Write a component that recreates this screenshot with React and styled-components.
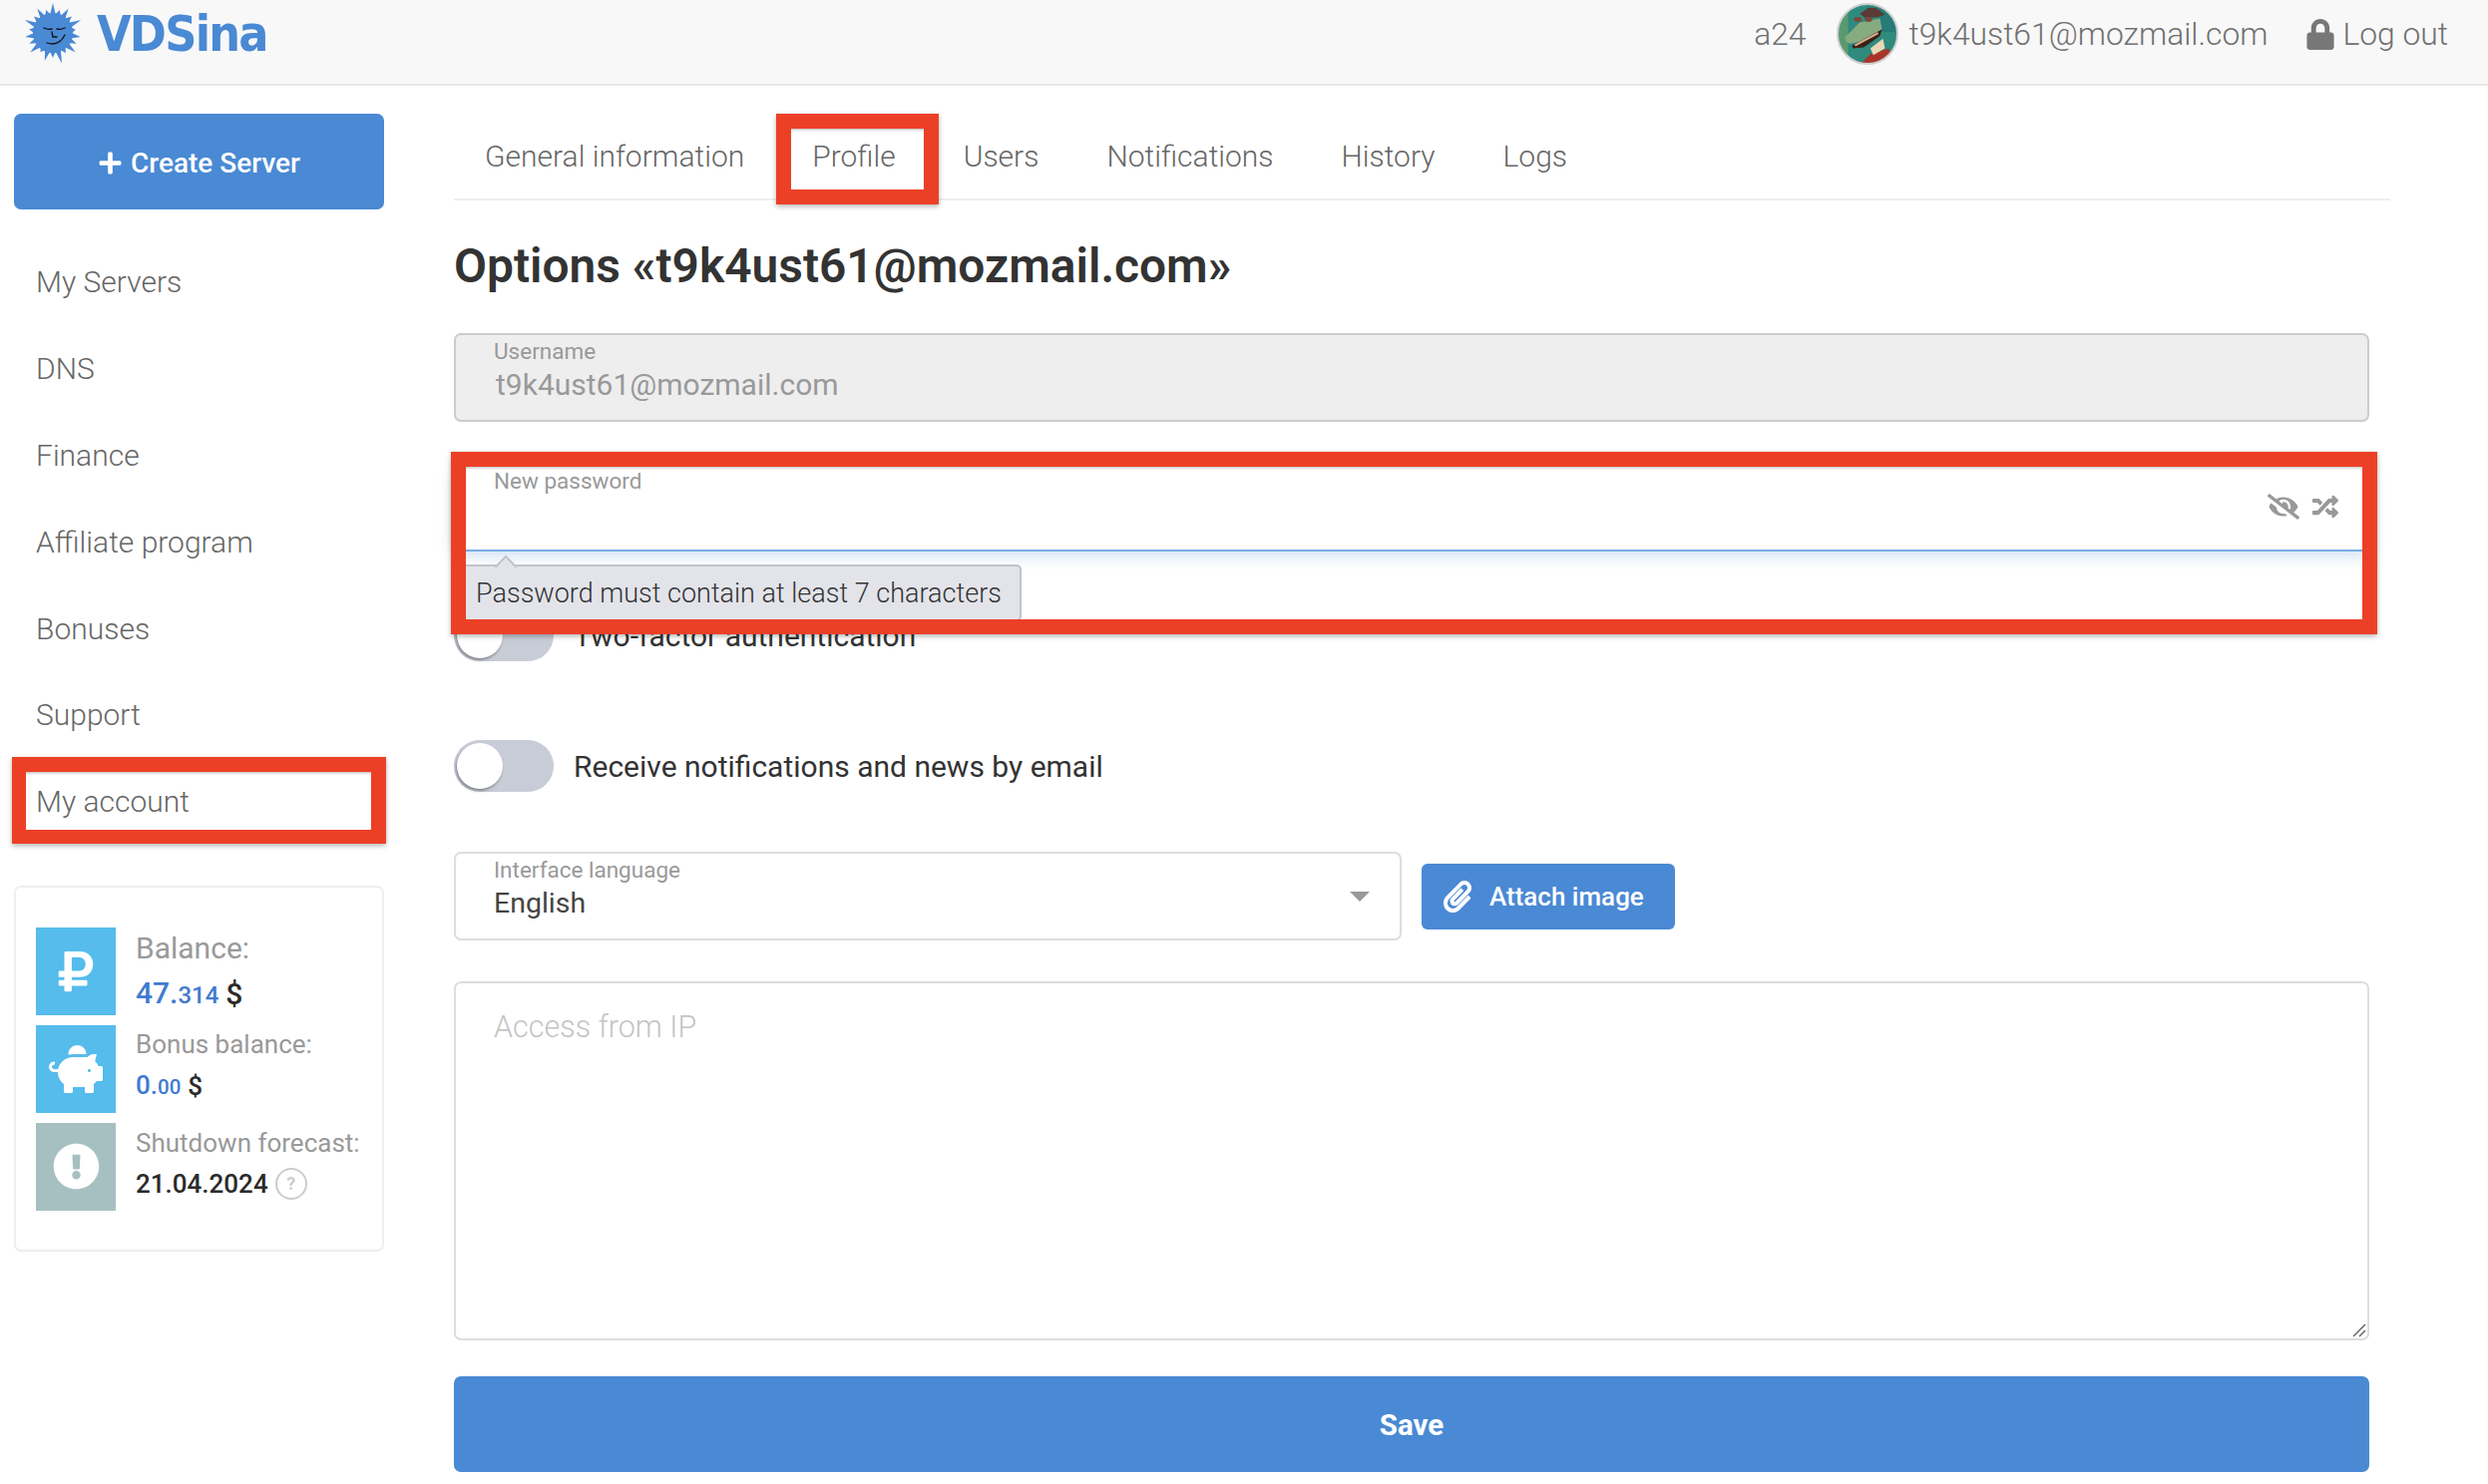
import React from 'react';
import styled, { createGlobalStyle } from 'styled-components';
import { FaLock, FaPlus, FaRubleSign, FaPiggyBank, FaExclamationCircle, FaEyeSlash, FaRandom, FaPaperclip } from 'react-icons/fa';

const Global = createGlobalStyle`
  html, body { margin: 0; padding: 0; background: #fff; }
  body { font-family: Roboto, "Liberation Sans", sans-serif; color: #333; }
  * { box-sizing: border-box; }
`;

const BLUE = '#4a89d4';
const RED = '#ec4026';

const Page = styled.div`width: 2494px; height: 1488px; overflow: hidden;`;

const Header = styled.header`
  height: 86px; background: #f8f8f8; border-bottom: 2px solid #e8e8e8;
  display: flex; align-items: flex-start; justify-content: space-between;
  padding: 0 40px 0 23px;
`;
const Brand = styled.div`display: flex; align-items: center; gap: 14px; height: 66px;`;
const Wordmark = styled.span`
  display: inline-block; font-family: "DejaVu Sans", sans-serif; font-weight: 700; font-size: 50px; line-height: 1;
  letter-spacing: -2px; color: ${BLUE}; transform: scaleX(.895); transform-origin: left; margin-top: 1px;
`;
const UserBar = styled.div`
  display: flex; align-items: center; height: 68px; font-size: 31.8px; font-weight: 300; color: #707070;
`;
const Account = styled.span`margin-right: 31px;`;
const Avatar = styled.svg`width: 62px; height: 62px; margin-right: 10px; display: block;`;
const Email = styled.span`margin-right: 39px;`;
const LockIcon = styled(FaLock)`width: 28px; height: 31px; margin-right: 8px; color: #777;`;

const Body = styled.div`display: flex;`;

const Sidebar = styled.aside`width: 455px; padding: 28px 70px 0 14px; flex: none;`;
const CreateButton = styled.button`
  width: 100%; height: 96px; background: ${BLUE}; border: 0; border-radius: 7px; color: #fff; padding: 2px 0 0;
  display: flex; align-items: center; justify-content: center; gap: 8px; font: 500 28px Roboto, sans-serif;
  svg { width: 25px; height: 25px; }
`;
const Nav = styled.nav`margin-top: 29.5px;`;
const NavItem = styled.div`
  position: relative; height: 86.8px; display: flex; align-items: center; padding-left: 22px;
  font-size: 30px; font-weight: 300; color: #666;
`;
const MarkBox = styled.div`
  position: absolute; border: 15px solid ${RED}; pointer-events: none; z-index: 5;
  box-shadow: 0 2px 5px rgba(0,0,0,.3), inset 0 3px 3px -2px rgba(0,0,0,.3);
`;
const AccountMark = styled(MarkBox)`left: -2px; right: -2px; top: -1px; height: 87px; border-width: 15px 15px 14px 14px;`;
const Card = styled.section`
  margin-top: 40.6px; height: 367px; border: 2px solid #eee; border-radius: 7px; padding: 40px 0 0 20px;
  display: flex; flex-direction: column; gap: 10px;
`;
const Stat = styled.div`display: flex; gap: 20px; height: 88px;`;
const StatIcon = styled.div`
  width: 80px; height: 88px; flex: none; display: flex; align-items: center; justify-content: center;
  background: ${p => p.$bg}; color: #fff;
  svg { width: ${p => p.$size}px; height: ${p => p.$size}px; }
`;
const StatText = styled.div`
  display: flex; flex-direction: column; justify-content: center; white-space: nowrap;
  padding-bottom: ${p => p.$big ? 0 : 5}px;
`;
const StatLabel = styled.div`
  font-size: ${p => p.$big ? 30 : 26}px; color: #999; line-height: ${p => p.$big ? 46 : 40}px;
`;
const StatValue = styled.div`
  font-weight: 500; font-size: ${p => p.$big ? 30 : 26}px; line-height: ${p => p.$big ? 44 : 42}px; color: #2b2b2b;
  display: flex; align-items: center;
`;
const Amount = styled.span`color: #3f7bd0; margin-right: 7px;`;
const Cents = styled.small`font-size: ${p => p.$big ? 24 : 20.5}px; font-weight: 500;`;
const Hint = styled.span`
  width: 32px; height: 32px; border: 2px solid #ccc; border-radius: 50%; color: #ccc; margin-left: 7px;
  display: inline-flex; align-items: center; justify-content: center; font-size: 18px; font-weight: 700;
`;

const Main = styled.main`width: 1941px; flex: none;`;
const Tabs = styled.div`
  height: 115px; padding-top: 27px; border-bottom: 2px solid #eee; display: flex; align-items: center;
`;
const Tab = styled.div`
  position: relative; padding: 0 34px; font-size: 30px; font-weight: 300; color: #666; white-space: nowrap;
  &:first-child { margin-left: -3px; }
`;
const TabMark = styled(MarkBox)`left: -2px; width: 163px; top: -25px; height: 91px;`;
const Form = styled.div`width: 1920px;`;
const Title = styled.h1`
  margin: 0; height: 133px; padding-bottom: 2px; display: flex; align-items: center; font-size: 47.9px; font-weight: 600; color: #333;
`;
const Field = styled.div`
  position: relative; height: 89px; width: ${p => p.$w || '100%'}; border-radius: 7px; padding: 2.5px 38px 0;
  border: 2px solid ${p => p.$focus ? '#7aaee6' : p.$disabled ? '#ccc' : '#ddd'};
  background: ${p => p.$disabled ? '#eee' : '#fff'};
  ${p => p.$focus && 'box-shadow: 0 4px 16px rgba(74,137,212,.28);'}
`;
const FieldLabel = styled.div`font-size: 22.5px; color: #999; line-height: 26px;`;
const FieldValue = styled.div`
  font-size: ${p => p.$muted ? 30 : 28.5}px; line-height: 42px; color: ${p => p.$muted ? '#999' : '#444'};
  padding-left: ${p => p.$muted ? 2 : 0}px;
`;
const PasswordBlock = styled.div`position: relative; margin-top: 41px; z-index: 3;`;
const PasswordTools = styled.div`
  position: absolute; right: 29px; top: 29px; display: flex; align-items: center; gap: 13px; color: #999;
`;
const EyeIcon = styled(FaEyeSlash)`width: 32px; height: 26px;`;
const ShuffleIcon = styled(FaRandom)`width: 26px; height: 26px;`;
const Tooltip = styled.div`
  position: absolute; left: 0; top: 102px; width: 569px; height: 57px; background: #e3e4ea;
  border: 2px solid #c0c2cc; border-radius: 5px; padding-left: 20px; display: flex; align-items: center;
  font-size: 27px; font-weight: 300; color: #333; white-space: nowrap;
  &::before {
    content: ""; position: absolute; left: 42px; top: -8px; width: 14px; height: 14px; background: #e3e4ea;
    border: 2px solid #c0c2cc; border-width: 2px 0 0 2px; transform: rotate(45deg);
  }
`;
const PasswordMark = styled(MarkBox)`left: -3px; right: -8px; top: -11px; height: 183px;`;
const ToggleRow = styled.div`
  display: flex; align-items: center; gap: 20px; height: 52px; margin-top: ${p => p.$mt}px;
  font-size: 30px; color: #333;
`;
const Toggle = styled.div`
  position: relative; width: 100px; height: 52px; border-radius: 26px; background: #c8ccd6; flex: none;
  &::after {
    content: ""; position: absolute; left: 3px; top: 3px; width: 46px; height: 46px; border-radius: 50%;
    background: #fff; box-shadow: -1px 2px 3px rgba(0,0,0,.35);
  }
`;
const LanguageRow = styled.div`display: flex; align-items: center; gap: 20px; margin-top: 60px;`;
const Caret = styled.span`
  position: absolute; right: 30px; top: 38px; width: 0; height: 0;
  border-left: 10px solid transparent; border-right: 10px solid transparent; border-top: 10px solid #999;
`;
const AttachButton = styled.button`
  width: 254px; height: 66px; border: 0; border-radius: 6px; background: ${BLUE}; color: #fff;
  display: flex; align-items: center; gap: 17px; padding-left: 21px; font: 500 26px Roboto, sans-serif;
  svg { width: 30px; height: 32px; }
`;
const AccessArea = styled.div`
  position: relative; height: 360px; margin-top: 41px; border: 2px solid #ddd; border-radius: 7px;
  padding: 26px 38px; font-size: 30.5px; font-weight: 300; color: #c4c4c4;
`;
const ResizeGrip = styled.svg`position: absolute; right: 1px; bottom: 1px; width: 16px; height: 16px;`;
const SaveButton = styled.button`
  display: block; width: 100%; height: 96px; margin-top: 36px; border: 0; border-radius: 7px; background: ${BLUE};
  color: #fff; font: 700 29.5px Roboto, sans-serif; padding: 2px 0 0;
`;

const sunPoints = (() => {
  const outer = [30, 24, 29, 25, 31, 23, 28, 26, 30, 24, 32, 25, 29, 23, 30, 26, 28, 24, 31, 25, 29, 24];
  const pts = [];
  outer.forEach((r, i) => {
    const a = (i / outer.length) * Math.PI * 2 - Math.PI / 2;
    const b = ((i + .5) / outer.length) * Math.PI * 2 - Math.PI / 2;
    pts.push(`${(30 + r * Math.cos(a)).toFixed(1)},${(30 + r * Math.sin(a)).toFixed(1)}`);
    pts.push(`${(30 + 19 * Math.cos(b)).toFixed(1)},${(30 + 19 * Math.sin(b)).toFixed(1)}`);
  });
  return pts.join(' ');
})();

const Sun = () => (
  <svg width="60" height="60" viewBox="0 0 60 60" style={{ flex: 'none' }}>
    <polygon points={sunPoints} fill={BLUE} />
    <circle cx="30" cy="30" r="20" fill={BLUE} />
    <g fill="none" stroke="#111" strokeWidth="1.3" strokeLinecap="round">
      <path d="M21 25q4 2 8 1M34 26q4 1 8-1" />
      <path d="M29 29l1 5h4" />
      <path d="M24 40q12 4 18-8" />
    </g>
  </svg>
);

const AvatarArt = () => (
  <Avatar viewBox="0 0 64 64">
    <defs>
      <clipPath id="av"><circle cx="32" cy="32" r="31" /></clipPath>
      <filter id="soft"><feGaussianBlur stdDeviation="0.7" /></filter>
    </defs>
    <g clipPath="url(#av)">
      <g filter="url(#soft)">
        <rect width="64" height="64" fill="#2e8b7e" />
        <rect x="0" y="0" width="12" height="64" fill="#5a9a70" />
        <rect x="44" y="0" width="20" height="30" fill="#277a78" />
        <path d="M24 11l9-6h8l9 7-9 3H29z" fill="#5a3a34" />
        <path d="M24 64l11-11 19-6 5 17z" fill="#a8352a" />
        <path d="M35 47l13-10 2 10-12 7z" fill="#e8d8b8" />
        <path d="M16 44l31-17-2 7-17 12-11 1z" fill="#3a2018" />
        <path d="M19 44l24-13" stroke="#e0b090" strokeWidth="2" />
        <path d="M9 35l15-15 21-4 2 11-23 13-10 2q-6-2-5-7z" fill="#86ab7f" />
        <ellipse cx="22" cy="17" rx="4" ry="2.5" fill="#7a4a3a" />
        <ellipse cx="33" cy="17" rx="4" ry="2.5" fill="#7a4a3a" />
      </g>
    </g>
    <circle cx="32" cy="32" r="31" fill="none" stroke="#cfcfcf" strokeWidth="2" />
  </Avatar>
);

const navItems = ['My Servers', 'DNS', 'Finance', 'Affiliate program', 'Bonuses', 'Support', 'My account'];
const tabs = ['General information', 'Profile', 'Users', 'Notifications', 'History', 'Logs'];

export default function App() {
  return (
    <Page>
      <Global />
      <Header>
        <Brand>
          <Sun />
          <Wordmark>VDSina</Wordmark>
        </Brand>
        <UserBar>
          <Account>a24</Account>
          <AvatarArt />
          <Email>t9k4ust61@mozmail.com</Email>
          <LockIcon />
          <span>Log out</span>
        </UserBar>
      </Header>
      <Body>
        <Sidebar>
          <CreateButton><FaPlus />Create Server</CreateButton>
          <Nav>
            {navItems.map(n => (
              <NavItem key={n}>{n}{n === 'My account' && <AccountMark />}</NavItem>
            ))}
          </Nav>
          <Card>
            <Stat>
              <StatIcon $bg="#55bcec" $size={46}><FaRubleSign /></StatIcon>
              <StatText $big>
                <StatLabel $big>Balance:</StatLabel>
                <StatValue $big><Amount>47.<Cents $big>314</Cents></Amount>$</StatValue>
              </StatText>
            </Stat>
            <Stat>
              <StatIcon $bg="#55bcec" $size={54}><FaPiggyBank /></StatIcon>
              <StatText>
                <StatLabel>Bonus balance:</StatLabel>
                <StatValue><Amount>0.<Cents>00</Cents></Amount>$</StatValue>
              </StatText>
            </Stat>
            <Stat>
              <StatIcon $bg="#a6c0c2" $size={47}><FaExclamationCircle /></StatIcon>
              <StatText>
                <StatLabel>Shutdown forecast:</StatLabel>
                <StatValue>21.04.2024<Hint>?</Hint></StatValue>
              </StatText>
            </Stat>
          </Card>
        </Sidebar>
        <Main>
          <Tabs>
            {tabs.map(t => (
              <Tab key={t}>{t}{t === 'Profile' && <TabMark />}</Tab>
            ))}
          </Tabs>
          <Form>
            <Title>Options «t9k4ust61@mozmail.com»</Title>
            <Field $disabled>
              <FieldLabel>Username</FieldLabel>
              <FieldValue $muted>t9k4ust61@mozmail.com</FieldValue>
            </Field>
            <PasswordBlock>
              <Field $focus>
                <FieldLabel>New password</FieldLabel>
                <PasswordTools><EyeIcon /><ShuffleIcon /></PasswordTools>
              </Field>
              <Tooltip>Password must contain at least 7 characters</Tooltip>
              <PasswordMark />
            </PasswordBlock>
            <ToggleRow $mt={58}><Toggle />Two-factor authentication</ToggleRow>
            <ToggleRow $mt={79}><Toggle />Receive notifications and news by email</ToggleRow>
            <LanguageRow>
              <Field $w="950px">
                <FieldLabel>Interface language</FieldLabel>
                <FieldValue>English</FieldValue>
                <Caret />
              </Field>
              <AttachButton><FaPaperclip />Attach image</AttachButton>
            </LanguageRow>
            <AccessArea>
              Access from IP
              <ResizeGrip viewBox="0 0 16 16">
                <path d="M15 3L3 15M15 9l-6 6" stroke="#666" strokeWidth="1.5" fill="none" />
              </ResizeGrip>
            </AccessArea>
            <SaveButton>Save</SaveButton>
          </Form>
        </Main>
      </Body>
    </Page>
  );
}
